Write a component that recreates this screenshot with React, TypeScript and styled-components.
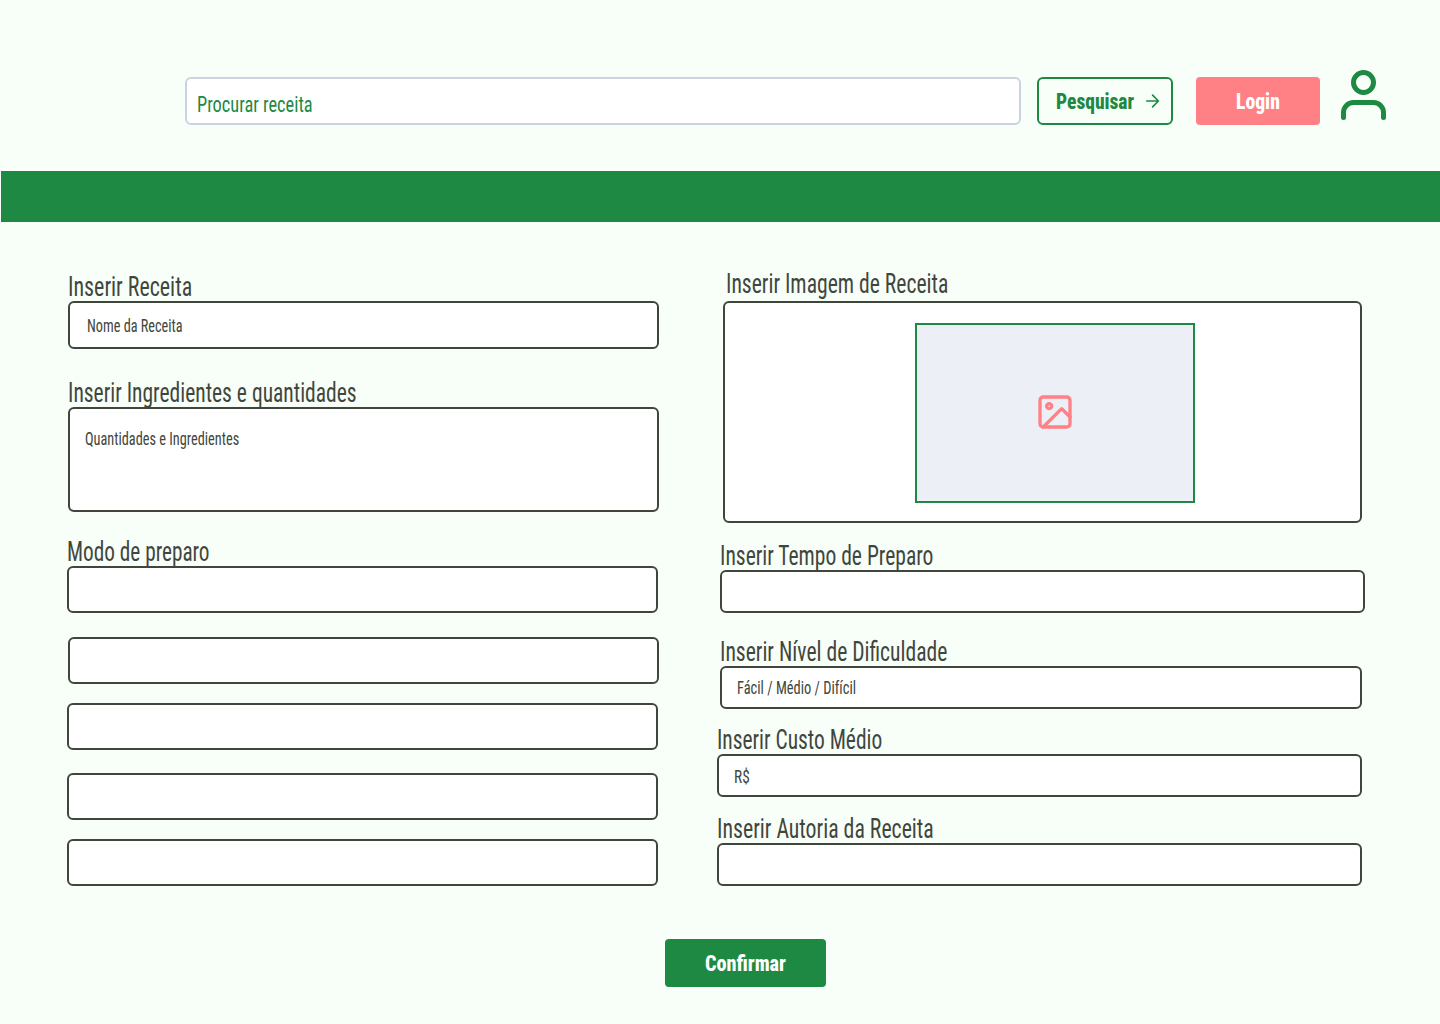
import React, { useLayoutEffect, useRef, useState } from "react";
import styled, { createGlobalStyle } from "styled-components";

const color = {
  page: "#f8fff8",
  green: "#1d8943",
  ink: "#41463d",
  pink: "#ff8085",
  line: "#cbd2e0",
  photo: "#edeff7",
};

const GlobalStyle = createGlobalStyle`
  *, *::before, *::after { box-sizing: border-box; }
  body {
    margin: 0;
    background: ${color.page};
    font-family: Roboto, "Liberation Sans", sans-serif;
    font-stretch: 75%;
  }
`;

/* Condensed lettering: squeezes a line of text to a given width. */
const FitBox = styled.span<{ $width: number }>`
  display: block;
  flex: none;
  width: ${(p) => p.$width}px;
  white-space: nowrap;
`;

const FitInner = styled.span`
  display: inline-block;
  vertical-align: top;
  transform-origin: 0 50%;
`;

function Fit({ width, children }: { width: number; children: string }) {
  const ref = useRef<HTMLSpanElement>(null);
  const [scale, setScale] = useState(0.65);
  useLayoutEffect(() => {
    if (ref.current) setScale(width / ref.current.offsetWidth);
  }, [width, children]);
  return (
    <FitBox $width={width}>
      <FitInner ref={ref} style={{ transform: `scaleX(${scale})` }}>
        {children}
      </FitInner>
    </FitBox>
  );
}

const Page = styled.div`
  width: 1440px;
  height: 1024px;
  overflow: hidden;
  background: ${color.page};
`;

const Header = styled.header`
  display: flex;
  align-items: flex-start;
  height: 171px;
  padding: 77px 0 0 185px;
`;

const SearchBox = styled.div`
  width: 836px;
  height: 48px;
  padding: 12px 0 0 9.5px;
  border: 2px solid ${color.line};
  border-radius: 6px;
  background: #fff;
  color: ${color.green};
  font-size: 22.6px;
  font-weight: 450;
  line-height: 28px;
`;

const Button = styled.button<{ $kind: "outline" | "pink" | "green" }>`
  display: flex;
  align-items: center;
  justify-content: ${(p) => (p.$kind === "outline" ? "flex-start" : "center")};
  width: ${(p) => ({ outline: 136, pink: 124, green: 161 })[p.$kind]}px;
  height: 48px;
  margin: 0;
  padding: ${(p) => (p.$kind === "outline" ? "0 0 0 16.5px" : "0")};
  border: ${(p) => (p.$kind === "outline" ? `2px solid ${color.green}` : "0")};
  border-radius: ${(p) => (p.$kind === "outline" ? 6 : 4)}px;
  background: ${(p) => ({ outline: "transparent", pink: color.pink, green: color.green })[p.$kind]};
  color: ${(p) => (p.$kind === "outline" ? color.green : "#fff")};
  font-family: inherit;
  font-stretch: inherit;
  font-size: 22.6px;
  font-weight: 800;
  line-height: 30px;
  text-align: left;

  ${FitBox} {
    padding-top: 2px;
  }
`;

const SearchButton = styled(Button)`
  margin-left: 16px;
`;

const LoginButton = styled(Button)`
  margin-left: 23px;
`;

const ArrowIcon = styled.svg`
  width: 20px;
  height: 20px;
  margin-left: 8.5px;
  transform: translateX(-0.4px);
`;

const UserIcon = styled.svg`
  width: 60px;
  height: 60px;
  margin: -12px 0 0 13px;
  transform: translateX(0.5px);
`;

const Band = styled.div`
  height: 51px;
  margin-left: 1px;
  background: ${color.green};
`;

const Form = styled.main`
  display: grid;
  grid-template-columns: 650px 1fr;
  height: 664px;
  padding: 49px 0 0 67px;
`;

const Column = styled.section`
  display: flex;
  flex-direction: column;
`;

const Group = styled.div<{ $top?: number; $left?: number }>`
  margin: ${(p) => p.$top ?? 0}px 0 0 ${(p) => p.$left ?? 0}px;
`;

const Label = styled.div<{ $raised?: boolean }>`
  height: 30px;
  padding-left: ${(p) => (p.$raised ? 2.5 : 0)}px;
  margin-top: ${(p) => (p.$raised ? -3 : 0)}px;
  margin-bottom: ${(p) => (p.$raised ? 3 : 0)}px;
  color: ${color.ink};
  font-size: 27.3px;
  font-weight: 440;
  line-height: 32px;
`;

const Field = styled.div<{ $width?: number; $height?: number; $pad?: string }>`
  width: ${(p) => p.$width ?? 591}px;
  height: ${(p) => p.$height ?? 47}px;
  padding: ${(p) => p.$pad ?? "0"};
  border: 2px solid ${color.ink};
  border-radius: 6px;
  background: #fff;
  color: ${color.ink};
  font-size: 18.2px;
  font-weight: 440;
  line-height: 24px;
`;

const Photo = styled.div`
  display: flex;
  align-items: center;
  justify-content: center;
  width: 280px;
  height: 180px;
  border: 2px solid ${color.green};
  background: ${color.photo};
`;

const PhotoIcon = styled.svg`
  width: 40px;
  height: 40px;
  margin-top: -2px;
`;

const Footer = styled.footer`
  padding: 53px 0 0 665px;
`;

const stroke = {
  viewBox: "0 0 24 24",
  fill: "none",
  strokeWidth: 2,
  strokeLinecap: "round" as const,
  strokeLinejoin: "round" as const,
};

export default function App() {
  return (
    <Page>
      <GlobalStyle />
      <Header>
        <SearchBox>
          <Fit width={115.5}>Procurar receita</Fit>
        </SearchBox>
        <SearchButton $kind="outline">
          <Fit width={78.5}>Pesquisar</Fit>
          <ArrowIcon {...stroke} stroke={color.green}>
            <path d="M5 12h14M12 5l7 7-7 7" />
          </ArrowIcon>
        </SearchButton>
        <LoginButton $kind="pink">
          <Fit width={43.5}>Login</Fit>
        </LoginButton>
        <UserIcon {...stroke} stroke={color.green}>
          <path d="M20 21v-2a4 4 0 0 0-4-4H8a4 4 0 0 0-4 4v2" />
          <circle cx="12" cy="7" r="4" />
        </UserIcon>
      </Header>
      <Band />
      <Form>
        <Column>
          <Group $left={1}>
            <Label><Fit width={124.5}>Inserir Receita</Fit></Label>
            <Field $height={48} $pad="11px 0 0 16.5px">
              <Fit width={95.5}>Nome da Receita</Fit>
            </Field>
          </Group>
          <Group $top={28} $left={1}>
            <Label><Fit width={288.5}>Inserir Ingredientes e quantidades</Fit></Label>
            <Field $height={105} $pad="18px 0 0 14.5px">
              <Fit width={154}>Quantidades e Ingredientes</Fit>
            </Field>
          </Group>
          <Group $top={24}>
            <Label><Fit width={142.5}>Modo de preparo</Fit></Label>
            <Field />
          </Group>
          <Group $top={24} $left={1}><Field /></Group>
          <Group $top={19}><Field /></Group>
          <Group $top={23}><Field /></Group>
          <Group $top={19}><Field /></Group>
        </Column>
        <Column>
          <Group $left={6}>
            <Label $raised><Fit width={222.5}>Inserir Imagem de Receita</Fit></Label>
            <Field $width={639} $height={222} $pad="20px 0 0 190px">
              <Photo>
                <PhotoIcon {...stroke} stroke={color.pink}>
                  <rect x="3" y="3" width="18" height="18" rx="2" />
                  <circle cx="8.5" cy="8.5" r="1.5" />
                  <path d="M21 15l-5-5L5 21" />
                </PhotoIcon>
              </Photo>
            </Field>
          </Group>
          <Group $top={17} $left={3}>
            <Label><Fit width={213}>Inserir Tempo de Preparo</Fit></Label>
            <Field $width={645} $height={43} />
          </Group>
          <Group $top={23} $left={3}>
            <Label><Fit width={227}>Inserir Nível de Dificuldade</Fit></Label>
            <Field $width={642} $height={43} $pad="8px 0 0 14.5px">
              <Fit width={119}>Fácil / Médio / Difícil</Fit>
            </Field>
          </Group>
          <Group $top={15}>
            <Label><Fit width={165}>Inserir Custo Médio</Fit></Label>
            <Field $width={645} $height={43} $pad="9px 0 0 14.5px">
              <Fit width={16}>R$</Fit>
            </Field>
          </Group>
          <Group $top={16}>
            <Label><Fit width={217}>Inserir Autoria da Receita</Fit></Label>
            <Field $width={645} $height={43} />
          </Group>
        </Column>
      </Form>
      <Footer>
        <Button $kind="green">
          <Fit width={80.5}>Confirmar</Fit>
        </Button>
      </Footer>
    </Page>
  );
}
